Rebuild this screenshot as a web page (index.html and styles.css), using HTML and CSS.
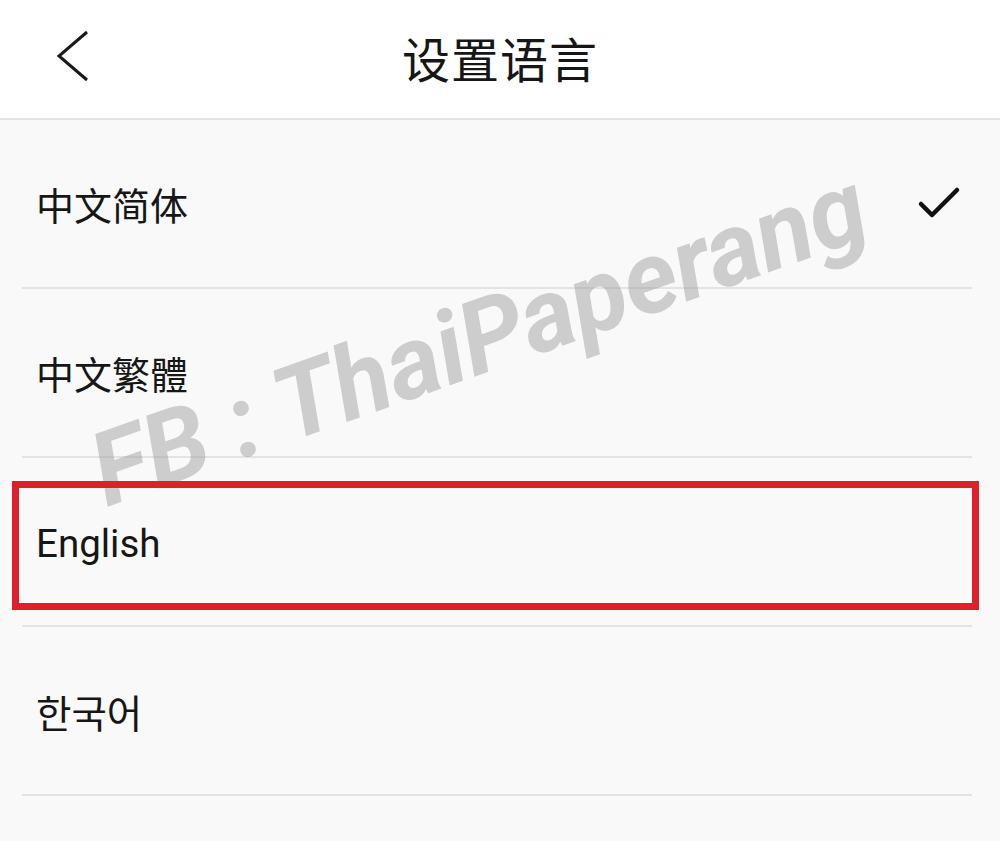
FILE: index.html
```html
<!DOCTYPE html>
<html lang="zh">
<head>
<meta charset="utf-8">
<link rel="stylesheet" href="styles.css">
</head>
<body>
<div class="page">
  <header class="topbar">
    <svg class="back" width="40" height="56" viewBox="0 0 40 56"><polyline points="34,4 6,28 34,52" fill="none" stroke="#1a1a1a" stroke-width="3"/></svg>
    <h1 class="title">设置语言</h1>
  </header>
  <ul class="langs">
    <li class="lang">
      <span class="name">中文简体</span>
      <svg class="check" width="46" height="36" viewBox="0 0 46 36"><polyline points="4,18 15,29 40,4" fill="none" stroke="#111" stroke-width="4.5" stroke-linecap="round" stroke-linejoin="round"/></svg>
    </li>
    <li class="lang"><span class="name">中文繁體</span></li>
    <li class="lang"><span class="name en">English</span><div class="mark"></div></li>
    <li class="lang"><span class="name ko">한국어</span></li>
  </ul>
  <div class="watermark">FB : ThaiPaperang</div>
</div>
</body>
</html>
```
FILE: styles.css
```css
* { box-sizing: border-box; }
html, body { margin: 0; padding: 0; }
body {
  width: 1000px;
  height: 841px;
  overflow: hidden;
  background: #f9f9f9;
  font-family: "Noto Sans CJK SC", "Noto Sans", sans-serif;
  color: #161616;
}
.page { position: relative; width: 1000px; height: 841px; }
.topbar {
  height: 120px;
  background: #ffffff;
  border-bottom: 2px solid #e2e2e2;
  display: flex;
  align-items: center;
  justify-content: center;
  position: relative;
}
.back {
  position: absolute;
  left: 53px;
  top: 28px;
}
.title {
  margin: 0;
  font-size: 48px;
  font-weight: 400;
  line-height: 1;
  letter-spacing: 1px;
  color: #161616;
  margin-top: -4px;
}
.langs {
  list-style: none;
  margin: 0;
  padding: 0;
}
.lang {
  position: relative;
  height: 169px;
  margin: 0 28px 0 22px;
  border-bottom: 2px solid #e3e3e3;
  display: flex;
  align-items: center;
  justify-content: space-between;
  padding: 0 9px 0 14px;
}
.name {
  font-size: 38px;
  line-height: 1;
  margin-top: 0;
}
.en {
  font-family: Roboto, "Noto Sans", sans-serif;
  font-size: 38.5px;
  margin-top: 6px;
}
.ko {
  font-family: "Noto Sans CJK KR", sans-serif;
  font-size: 38.5px;
  margin-top: 2px;
}
.check { margin-top: 0; }
.mark {
  position: absolute;
  left: -10px;
  top: 23px;
  width: 967px;
  height: 129px;
  border: 7px solid #e11f2c;
  z-index: 2;
}
.watermark {
  position: absolute;
  left: 112px;
  top: 420px;
  font-family: Roboto, "DejaVu Sans", sans-serif;
  font-weight: 700;
  font-style: italic;
  font-size: 102px;
  line-height: 1;
  color: rgba(150, 150, 150, 0.45);
  white-space: nowrap;
  transform: rotate(-19.5deg);
  transform-origin: left bottom;
  z-index: 1;
}
```
